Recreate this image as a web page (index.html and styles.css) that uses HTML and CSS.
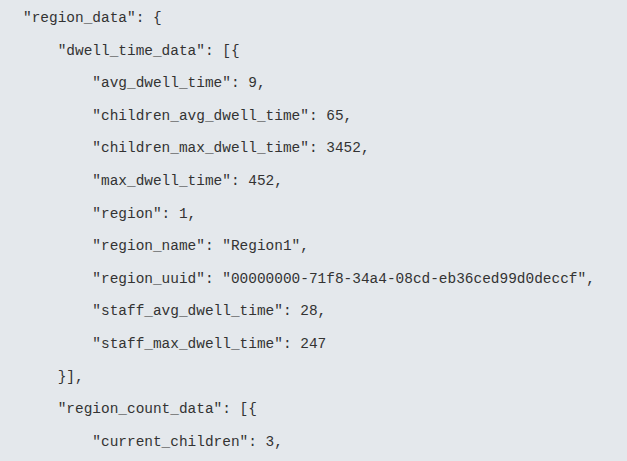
FILE: index.html
```html
<!DOCTYPE html>
<html>
<head>
<meta charset="utf-8">
<link rel="stylesheet" href="styles.css">
</head>
<body>
<div class="code-block"><pre class="code">″region_data″: {
    ″dwell_time_data″: [{
        ″avg_dwell_time″: 9,
        ″children_avg_dwell_time″: 65,
        ″children_max_dwell_time″: 3452,
        ″max_dwell_time″: 452,
        ″region″: 1,
        ″region_name″: ″Region1″,
        ″region_uuid″: ″00000000-71f8-34a4-08cd-eb36ced99d0deccf″,
        ″staff_avg_dwell_time″: 28,
        ″staff_max_dwell_time″: 247
    }],
    ″region_count_data″: [{
        ″current_children″: 3,</pre></div>
</body>
</html>
```
FILE: styles.css
```css
html, body {
  margin: 0;
  padding: 0;
  background: #e4e8ec;
}
.code-block {
  width: 627px;
  height: 461px;
  overflow: hidden;
  background: #e4e8ec;
}
.code {
  margin: 0;
  padding: 2px 0 0 23px;
  font-family: "Liberation Mono", "DejaVu Sans Mono", monospace;
  font-size: 14.45px;
  line-height: 32.6px;
  color: #333;
}
```
